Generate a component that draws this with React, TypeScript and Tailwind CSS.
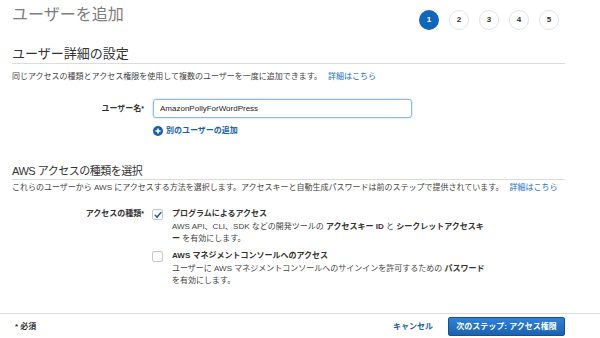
const steps = [1, 2, 3, 4, 5]

function CheckBox({ checked }: { checked: boolean }) {
  return (
    <div className="w-[11px] h-[11px] rounded-[2px] border border-[#c8c8c8] bg-white flex items-center justify-center shrink-0 shadow-[inset_0_1px_1px_rgba(0,0,0,0.06)]">
      {checked && (
        <svg width="8" height="8" viewBox="0 0 8 8">
          <path d="M1.2 4.2 L3.1 6.1 L6.9 1.6" fill="none" stroke="#1f5fb0" strokeWidth="1.5" strokeLinecap="round" strokeLinejoin="round" />
        </svg>
      )}
    </div>
  )
}

export default function App() {
  return (
    <div className="w-[600px] h-[338px] bg-white flex flex-col overflow-hidden text-[#333] font-['Liberation_Sans','Noto_Sans_CJK_JP',sans-serif]">
      {/* header */}
      <div className="flex justify-between pl-[12px] pr-[41px] h-[30px]">
        <h1 className="text-[16px] leading-[20px] mt-[5px] text-[#7d7d7d]">ユーザーを追加</h1>
        <div className="flex gap-[10px] mt-[10px]">
          {steps.map((s) => (
            <div
              key={s}
              className={
                s === 1
                  ? 'w-[20px] h-[20px] rounded-full bg-[#1166bb] text-white text-[8px] font-bold flex items-center justify-center'
                  : 'w-[20px] h-[20px] rounded-full border border-[#e3e3e3] bg-white text-[#333] text-[8px] font-bold flex items-center justify-center'
              }
            >
              {s}
            </div>
          ))}
        </div>
      </div>

      {/* user details */}
      <div className="mx-[12px] mr-[35px] mt-[16px]">
        <h2 className="text-[13px] leading-[16px] pb-[1px] border-b border-[#dcdcdc]">ユーザー詳細の設定</h2>
        <p className="text-[8px] leading-[12px] mt-[7px] text-[#444]">
          同じアクセスの種類とアクセス権限を使用して複数のユーザーを一度に追加できます。
          <span className="ml-[6px] text-[#1a6fc4]">詳細はこちら</span>
        </p>
      </div>

      <div className="flex items-center mt-[16px]">
        <div className="w-[145px] text-right text-[8px] font-bold leading-[12px] pr-[1px]">
          ユーザー名<span className="align-top text-[7px]">*</span>
        </div>
        <div className="ml-[8px] w-[259px] h-[19px] rounded-[3px] border border-[#8db7e6] shadow-[0_0_2px_rgba(90,150,220,0.6)] flex items-center pl-[6px] text-[8px] text-[#222]">
          AmazonPollyForWordPress
        </div>
      </div>

      <div className="flex items-center pl-[153px] mt-[7px] h-[12px] text-[8px] font-bold text-[#1a5fa8]">
        <svg width="10" height="10" viewBox="0 0 10 10" className="mr-[3px]">
          <circle cx="5" cy="5" r="5" fill="#1a5fa8" />
          <path d="M5 2.4 V7.6 M2.4 5 H7.6" stroke="white" strokeWidth="1.6" />
        </svg>
        別のユーザーの追加
      </div>

      {/* access type */}
      <div className="mx-[12px] mr-[35px] mt-[26px]">
        <h2 className="text-[11px] leading-[16px] tracking-[-0.5px] border-b border-[#dcdcdc]">AWS アクセスの種類を選択</h2>
        <p className="text-[8px] leading-[12px] mt-[2px] text-[#444]">
          これらのユーザーから AWS にアクセスする方法を選択します。アクセスキーと自動生成パスワードは前のステップで提供されています。
          <span className="ml-[6px] text-[#1a6fc4]">詳細はこちら</span>
        </p>
      </div>

      <div className="flex mt-[13px]">
        <div className="w-[145px] text-right text-[8px] font-bold leading-[14px] pr-[1px]">
          アクセスの種類<span className="align-top text-[7px]">*</span>
        </div>
        <div className="ml-[7px] flex flex-col gap-[4px]">
          <div className="flex">
            <div className="mt-[2px]">
              <CheckBox checked />
            </div>
            <div className="ml-[9px] text-[8px] whitespace-nowrap">
              <div className="font-bold leading-[14px]">プログラムによるアクセス</div>
              <div className="leading-[12px] text-[#444]">
                AWS API、CLI、SDK などの開発ツールの <b className="text-[#333]">アクセスキー ID</b> と{' '}
                <b className="text-[#333]">シークレットアクセスキ</b>
                <br />
                <b className="text-[#333]">ー</b> を有効にします。
              </div>
            </div>
          </div>
          <div className="flex">
            <div className="mt-[2px]">
              <CheckBox checked={false} />
            </div>
            <div className="ml-[9px] text-[8px] whitespace-nowrap">
              <div className="font-bold leading-[14px]">AWS マネジメントコンソールへのアクセス</div>
              <div className="leading-[12px] text-[#444]">
                ユーザーに AWS マネジメントコンソールへのサインインを許可するための{' '}
                <b className="text-[#333]">パスワード</b>
                <br />
                を有効にします。
              </div>
            </div>
          </div>
        </div>
      </div>

      {/* footer */}
      <div className="mt-auto h-[25px] border-t border-[#dcdcdc] flex items-center justify-between pl-[15px] pr-[35px] pt-[1px]">
        <div className="text-[8px] font-bold">* 必須</div>
        <div className="flex items-center">
          <span className="text-[8px] font-bold text-[#1a5fa8]">キャンセル</span>
          <button className="ml-[15px] h-[19px] w-[117px] rounded-[2px] border border-[#1b4f8c] bg-gradient-to-b from-[#2f82d6] to-[#1a62b0] text-white text-[8px] font-bold">
            次のステップ: アクセス権限
          </button>
        </div>
      </div>
    </div>
  )
}
